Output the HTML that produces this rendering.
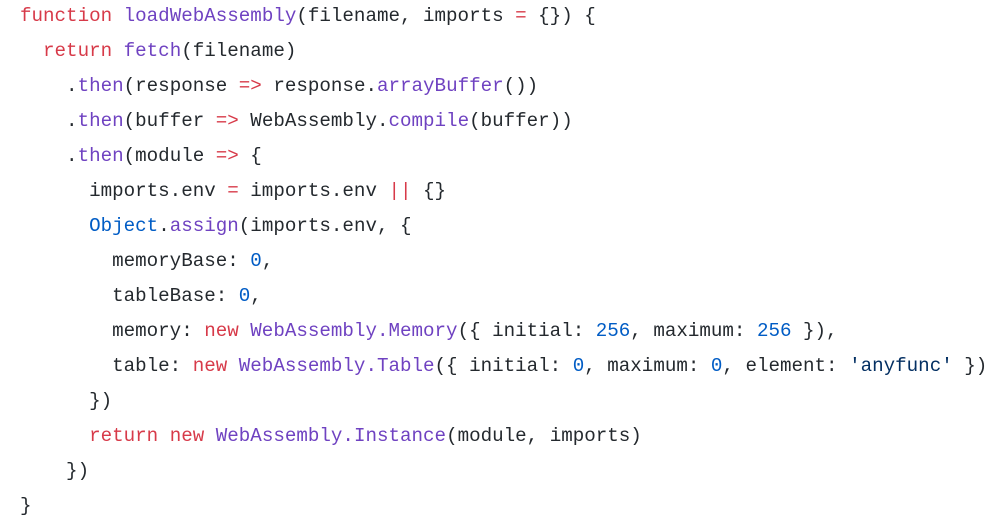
<!DOCTYPE html>
<html><head><meta charset="utf-8"><style>
html,body{margin:0;padding:0;background:#fff;width:1007px;height:525px;overflow:hidden}
pre{margin:0;position:absolute;left:20px;top:-1px;font-family:"Liberation Mono",monospace;font-size:19.2px;line-height:35px;color:#24292e}
.k{color:#d73a49}.f{color:#6f42c1}.n{color:#005cc5}.s{color:#032f62}
</style></head><body><pre><span class="k">function</span> <span class="f">loadWebAssembly</span>(filename, imports <span class="k">=</span> {}) {
  <span class="k">return</span> <span class="f">fetch</span>(filename)
    .<span class="f">then</span>(response <span class="k">=&gt;</span> response.<span class="f">arrayBuffer</span>())
    .<span class="f">then</span>(buffer <span class="k">=&gt;</span> WebAssembly.<span class="f">compile</span>(buffer))
    .<span class="f">then</span>(module <span class="k">=&gt;</span> {
      imports.env <span class="k">=</span> imports.env <span class="k">||</span> {}
      <span class="n">Object</span>.<span class="f">assign</span>(imports.env, {
        memoryBase: <span class="n">0</span>,
        tableBase: <span class="n">0</span>,
        memory: <span class="k">new</span> <span class="f">WebAssembly.Memory</span>({ initial: <span class="n">256</span>, maximum: <span class="n">256</span> }),
        table: <span class="k">new</span> <span class="f">WebAssembly.Table</span>({ initial: <span class="n">0</span>, maximum: <span class="n">0</span>, element: <span class="s">'anyfunc'</span> })
      })
      <span class="k">return</span> <span class="k">new</span> <span class="f">WebAssembly.Instance</span>(module, imports)
    })
}</pre></body></html>
